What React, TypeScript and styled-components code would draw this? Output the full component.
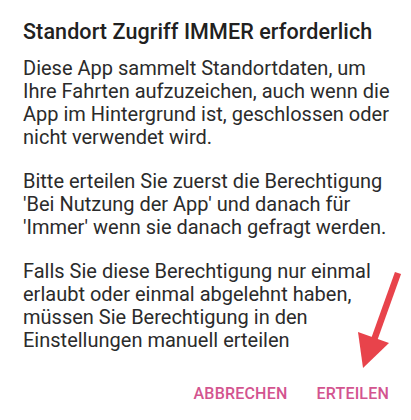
import React from 'react';
import styled, { createGlobalStyle } from 'styled-components';

const GlobalStyle = createGlobalStyle`
  html, body {
    margin: 0;
    padding: 0;
    background: #ffffff;
  }
  body {
    font-family: Roboto, "Noto Sans", sans-serif;
  }
`;

const Dialog = styled.div`
  position: relative;
  width: 411px;
  height: 420px;
  background: #ffffff;
  box-sizing: border-box;
  padding: 19px 12px 0 23px;
  overflow: hidden;
`;

const Title = styled.h1`
  margin: 0;
  font-size: 21.5px;
  font-weight: 500;
  color: #212121;
  line-height: 26px;
  letter-spacing: 0.1px;
`;

const Body = styled.div`
  margin-top: 12px;
  font-size: 20px;
  line-height: 23px;
  color: #2b2b2b;
`;

const Paragraph = styled.p`
  margin: 0 0 21px 0;
`;

const Actions = styled.div`
  display: flex;
  justify-content: flex-end;
  gap: 29px;
  margin-top: 32px;
  padding-right: 10px;
`;

const ActionButton = styled.button`
  border: none;
  background: none;
  padding: 0;
  font-family: Roboto, sans-serif;
  font-size: 16px;
  font-weight: 500;
  color: #d3548f;
  letter-spacing: 0.2px;
`;

const Arrow = styled.svg`
  position: absolute;
  right: 0;
  top: 268px;
`;

const App = () => (
  <>
    <GlobalStyle />
    <Dialog>
      <Title>Standort Zugriff IMMER erforderlich</Title>
      <Body>
        <Paragraph>
          Diese App sammelt Standortdaten, um Ihre Fahrten aufzuzeichen, auch wenn die App im Hintergrund ist,
          geschlossen oder nicht verwendet wird.
        </Paragraph>
        <Paragraph>
          Bitte erteilen Sie zuerst die Berechtigung 'Bei Nutzung der App' und danach für 'Immer' wenn sie danach
          gefragt werden.
        </Paragraph>
        <Paragraph>
          Falls Sie diese Berechtigung nur einmal erlaubt oder einmal abgelehnt haben, müssen Sie Berechtigung in
          den Einstellungen manuell erteilen
        </Paragraph>
      </Body>
      <Actions>
        <ActionButton>ABBRECHEN</ActionButton>
        <ActionButton>ERTEILEN</ActionButton>
      </Actions>
      <Arrow width="71" height="110" viewBox="340 268 71 110">
        <line x1="398" y1="273" x2="374" y2="340" stroke="#e8434b" strokeWidth="6.5" strokeLinecap="butt" />
        <polygon points="358,332 389,343 363,368" fill="#e8434b" />
      </Arrow>
    </Dialog>
  </>
);

export default App;
